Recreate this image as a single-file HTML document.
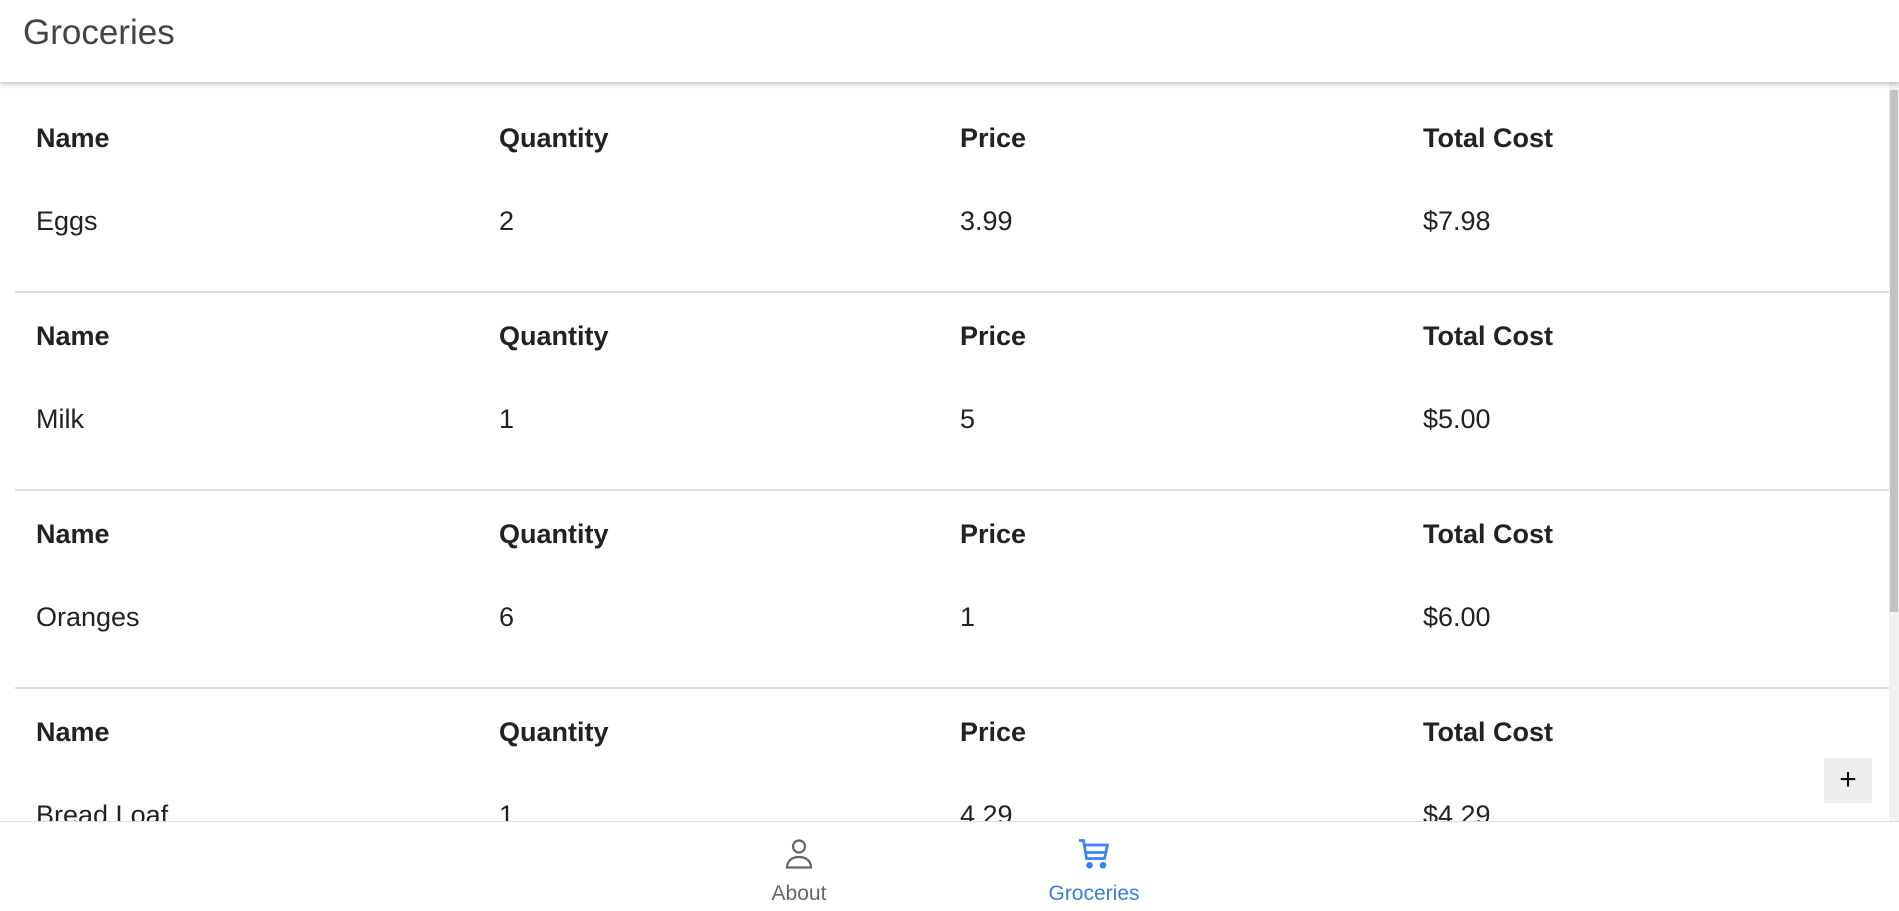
<!DOCTYPE html>
<html><head><meta charset="utf-8"><style>
*{margin:0;padding:0;box-sizing:border-box}
body{width:1899px;height:911px;overflow:hidden;background:#fff;font-family:"Liberation Sans",Arial,sans-serif;color:#222;position:relative}
.hdr{position:absolute;left:0;top:0;width:1899px;height:82px;background:#fff;box-shadow:0 2px 5px rgba(0,0,0,.25);z-index:3}
.hdr span{position:absolute;left:23px;top:13px;font-size:35px;color:#444}
.content{position:absolute;left:0;top:82px;width:1889px;height:739px;overflow:hidden}
.row{position:absolute;left:15px;width:1874px;height:198px;border-bottom:2px solid #ddd}
.row div{position:absolute;font-size:27px;line-height:30px}
.row .h{font-weight:bold;top:28px}
.row .d{top:111px}
.c1{left:21px}.c2{left:484px}.c3{left:945px}.c4{left:1408px}
.sb{position:absolute;left:1889px;top:82px;width:10px;height:739px;background:#f1f1f1}
.thumb{position:absolute;left:1px;top:8px;width:8px;height:522px;background:#c1c1c1}
.plus{position:absolute;left:1824px;top:758px;width:48px;height:45px;background:#eee;font-size:30px;text-align:center;line-height:44px;color:#111;z-index:2}
.foot{position:absolute;left:0;top:821px;width:1899px;height:90px;border-top:1px solid #ddd;background:#fff;z-index:3}
.tab{position:absolute;top:0;width:140px;text-align:center;font-size:21px}
.tab svg{display:block;margin:14px auto 0}
.tab span{display:block;margin-top:10px}
</style></head><body>
<div class="hdr"><span>Groceries</span></div>
<div class="content">
<div class="row" style="top:13px"><div class="h c1">Name</div><div class="h c2">Quantity</div><div class="h c3">Price</div><div class="h c4">Total Cost</div><div class="d c1">Eggs</div><div class="d c2">2</div><div class="d c3">3.99</div><div class="d c4">$7.98</div></div>
<div class="row" style="top:211px"><div class="h c1">Name</div><div class="h c2">Quantity</div><div class="h c3">Price</div><div class="h c4">Total Cost</div><div class="d c1">Milk</div><div class="d c2">1</div><div class="d c3">5</div><div class="d c4">$5.00</div></div>
<div class="row" style="top:409px"><div class="h c1">Name</div><div class="h c2">Quantity</div><div class="h c3">Price</div><div class="h c4">Total Cost</div><div class="d c1">Oranges</div><div class="d c2">6</div><div class="d c3">1</div><div class="d c4">$6.00</div></div>
<div class="row" style="top:607px"><div class="h c1">Name</div><div class="h c2">Quantity</div><div class="h c3">Price</div><div class="h c4">Total Cost</div><div class="d c1">Bread Loaf</div><div class="d c2">1</div><div class="d c3">4.29</div><div class="d c4">$4.29</div></div>
</div>
<div class="sb"><div class="thumb"></div></div>
<div class="plus">+</div>
<div class="foot">
<div class="tab" style="left:729px;color:#666"><svg width="36" height="36" viewBox="0 0 24 24" fill="none" stroke="#666" stroke-width="1.5"><circle cx="12" cy="7" r="4"/><path d="M4 21c0-4.5 3.5-7 8-7s8 2.5 8 7z"/></svg><span>About</span></div>
<div class="tab" style="left:1024px;color:#3b7ddd"><svg width="36" height="36" viewBox="0 0 24 24" fill="none" stroke="#3b82f6" stroke-width="1.8"><path d="M2 3h3l2 12h12l2-9H6"/><path d="M7 11h13"/><circle cx="9" cy="19.5" r="1.3" fill="#3b82f6"/><circle cx="18" cy="19.5" r="1.3" fill="#3b82f6"/></svg><span>Groceries</span></div>
</div>
</body></html>
